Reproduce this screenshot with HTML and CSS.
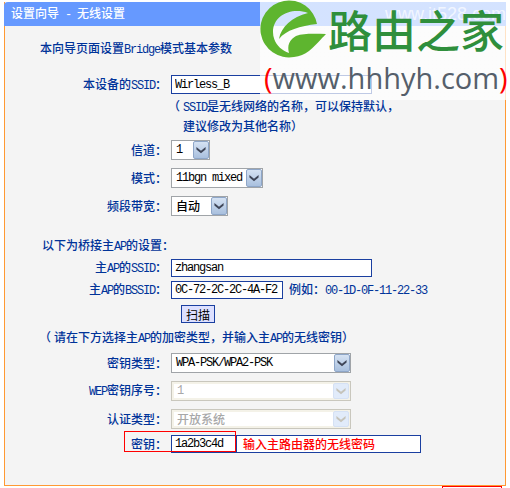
FILE: index.html
```html
<!DOCTYPE html>
<html lang="zh-CN">
<head>
    <meta charset="UTF-8">
    <title>设置向导 - 无线设置</title>
    <link rel="stylesheet" href="styles.css">
</head>
<body>
    <svg class="defs" width="0" height="0">
        <symbol id="chevron" viewBox="0 0 12 9">
            <path d="M0.5 1 L6 5.5 L11.5 1 L11.5 4 L6 8.5 L0.5 4 Z"/>
        </symbol>
    </svg>

    <div class="panel">
        <div class="panel-head">
            <span>设置向导<span class="en"> - </span>无线设置</span>
            <span class="site">www.it528.com</span>
        </div>

        <div class="intro">本向导页面设置<span class="en">Bridge</span>模式基本参数</div>

        <div class="row row-ssid">
            <label>本设备的<span class="en">SSID</span><span class="colon">：</span></label>
            <input class="field field-main" type="text" value="Wirless_B">
        </div>
        <div class="note">
            <div><span class="open">（</span><span class="en">SSID</span>是无线网络的名称，可以保持默认，</div>
            <div class="note-more">建议修改为其他名称）</div>
        </div>

        <div class="row row-channel">
            <label>信道<span class="colon">：</span></label>
            <div class="sel sel-channel"><span class="sel-text en">1</span><span class="sel-btn"><svg><use href="#chevron"/></svg></span></div>
        </div>
        <div class="row row-next">
            <label>模式<span class="colon">：</span></label>
            <div class="sel sel-mode"><span class="sel-text en">11bgn mixed</span><span class="sel-btn"><svg><use href="#chevron"/></svg></span></div>
        </div>
        <div class="row row-next">
            <label>频段带宽<span class="colon">：</span></label>
            <div class="sel sel-band"><span class="sel-text">自动</span><span class="sel-btn"><svg><use href="#chevron"/></svg></span></div>
        </div>

        <div class="subhead">以下为桥接主<span class="en">AP</span>的设置<span class="colon">：</span></div>

        <div class="row row-ap">
            <label>主<span class="en">AP</span>的<span class="en">SSID</span><span class="colon">：</span></label>
            <input class="field field-main" type="text" value="zhangsan">
        </div>
        <div class="row row-bssid">
            <label>主<span class="en">AP</span>的<span class="en">BSSID</span><span class="colon">：</span></label>
            <input class="field field-bssid" type="text" value="0C-72-2C-2C-4A-F2">
            <span class="example">例如<span class="colon">：</span><span class="en">00-1D-0F-11-22-33</span></span>
        </div>
        <button class="scan" type="button">扫描</button>

        <div class="subnote"><span class="open">（</span>请在下方选择主<span class="en">AP</span>的加密类型，并输入主<span class="en">AP</span>的无线密钥）</div>

        <div class="row row-enc">
            <label>密钥类型<span class="colon">：</span></label>
            <div class="sel sel-wide"><span class="sel-text en">WPA-PSK/WPA2-PSK</span><span class="sel-btn"><svg><use href="#chevron"/></svg></span></div>
        </div>
        <div class="row row-next">
            <label><span class="en">WEP</span>密钥序号<span class="colon">：</span></label>
            <div class="sel sel-wide sel-off"><span class="sel-text en">1</span><span class="sel-btn"><svg><use href="#chevron"/></svg></span></div>
        </div>
        <div class="row row-next">
            <label>认证类型<span class="colon">：</span></label>
            <div class="sel sel-wide sel-off"><span class="sel-text">开放系统</span><span class="sel-btn"><svg><use href="#chevron"/></svg></span></div>
        </div>
        <div class="row row-key">
            <label>密钥<span class="colon">：</span></label>
            <input class="field field-key" type="text" value="1a2b3c4d">
            <span class="key-hint">输入主路由器的无线密码</span>
            <span class="key-mark"></span>
        </div>
    </div>

    <div class="watermark">
        <svg class="logo" viewBox="0 0 70 60">
            <path fill-rule="evenodd" d="M59 24 A28.5 28.5 0 1 0 36 57 C50 56 58 44 68 34 Z M50 13 C34 7 15 15 15 32 C15 42 22 50 31 53 C29 46 31 40 38 36 C46 33 58 34 68 34 L59 24 C42 26 28 30 21 39 C23 27 34 17 50 13 Z"/>
        </svg>
        <div class="brand">路由之家</div>
        <div class="url"><span class="paren">(</span>www.hhhyh.com<span class="paren">)</span></div>
    </div>
    <div class="corner-box"></div>
</body>
</html>
```

FILE: styles.css
```css
html, body {
    margin: 0;
    padding: 0;
    height: 488px;
    overflow: hidden;
}
body {
    background: #fff;
    padding-top: 2px;
    box-sizing: border-box;
    font-family: "Noto Sans CJK SC", sans-serif;
    font-size: 12px;
    font-weight: 500;
    line-height: 16px;
    color: #003399;
    position: relative;
}
.defs {
    position: absolute;
}
.en {
    font-family: "Liberation Mono", monospace;
    letter-spacing: -1.2px;
}
.colon {
    font-family: "Noto Sans CJK TC", sans-serif;
}
.open {
    margin-left: -3px;
    margin-right: 3px;
}
.panel {
    width: 502px;
    height: 484px;
    margin-left: 4px;
    box-sizing: border-box;
    background: #f4f4f4;
    border-left: 1px solid #ff9933;
    border-right: 1px solid #ff9933;
    border-bottom: 1px solid #ff9933;
}
.panel-head {
    display: flex;
    justify-content: space-between;
    align-items: center;
    height: 24px;
    margin: 0 -1px;
    padding-left: 7px;
    background: #6699ff;
    color: #fff;
    border-radius: 4px 0 0 0;
    overflow: hidden;
}
.site {
    font-family: "Liberation Sans", sans-serif;
    font-size: 18px;
    font-weight: 400;
    color: rgba(255, 255, 255, 0.7);
    white-space: nowrap;
}
.intro {
    margin: 14px 0 0 35px;
    height: 16px;
}
.row {
    display: flex;
    align-items: center;
}
.row label {
    width: 162px;
    margin-right: 4px;
    text-align: right;
    flex: none;
}
.row-ssid { margin-top: 19px; height: 19px; }
.row-channel { margin-top: 5px; height: 20px; }
.row-next { margin-top: 8px; height: 20px; }
.row-ap { margin-top: 6px; height: 18px; }
.row-bssid { margin-top: 4px; height: 18px; }
.row-enc { margin-top: 8px; height: 20px; }
.row-key { margin-top: 6px; height: 18px; position: relative; }

.note {
    margin: 3px 0 0 166px;
    height: 38px;
    line-height: 18px;
}
.note-more {
    padding-left: 12px;
}
.subhead {
    margin: 21px 0 0 37px;
    height: 16px;
}
.subnote {
    margin: 6px 0 0 37px;
    height: 16px;
}

.field {
    box-sizing: border-box;
    height: 100%;
    margin: 0;
    padding: 0 0 0 3px;
    background: #fff;
    border: 1px solid #1a3fa0;
    border-radius: 0;
    outline: none;
    color: #000;
    font-family: "Liberation Mono", monospace;
    font-size: 12px;
    letter-spacing: -1.2px;
}
.field-main { width: 201px; }
.field-bssid { width: 112px; }
.field-key { width: 65px; border-right: none; }

.example {
    margin-left: 6px;
}
.scan {
    display: block;
    width: 34px;
    height: 18px;
    margin: 6px 0 0 176px;
    padding: 0;
    background: #dde0ff;
    border: 1px solid #1a3fa0;
    border-radius: 0;
    color: #000;
    font-family: inherit;
    font-size: 12px;
}

.sel {
    display: flex;
    align-items: center;
    justify-content: space-between;
    box-sizing: border-box;
    height: 20px;
    background: #fff;
    border: 1px solid #a0a4a8;
    color: #000;
}
.sel-text {
    padding-left: 4px;
    white-space: nowrap;
}
.sel-btn {
    display: flex;
    align-items: center;
    justify-content: center;
    width: 16px;
    height: 18px;
    background: linear-gradient(#d5e2f3, #a9c0de);
    border: 1px solid #8ea6c8;
    border-radius: 2px;
    box-sizing: border-box;
}
.sel-btn svg {
    width: 10px;
    height: 8px;
    fill: #3f4658;
}
.sel-channel { width: 39px; }
.sel-mode { width: 92px; }
.sel-band { width: 57px; }
.sel-wide { width: 180px; }
.sel-off {
    padding: 1px;
    background: #fff;
    border-color: #c9c7bd;
    box-shadow: inset 0 0 0 2px #f4f2e8;
    color: #a8a8a8;
}
.sel-off .sel-btn {
    height: 16px;
    background: #e1ebfa;
    border-color: #d5e1f4;
}
.sel-off .sel-btn svg {
    fill: #c5c3ba;
}

.key-hint {
    box-sizing: border-box;
    width: 185px;
    height: 100%;
    padding-left: 6px;
    background: #fff;
    border: 1px solid #1a3fa0;
    color: #f00;
}
.key-mark {
    position: absolute;
    left: 119px;
    top: -4px;
    width: 112px;
    height: 21px;
    box-sizing: border-box;
    border: 1px solid #f00;
}

.watermark {
    position: absolute;
    left: 260px;
    top: 0;
    width: 246px;
    height: 100px;
    background: linear-gradient(transparent 2px, rgba(255, 255, 255, 0.72) 2px);
}
.logo {
    position: absolute;
    left: -2px;
    top: 0;
    width: 70px;
    height: 60px;
    fill: #5eb52f;
}
.brand {
    position: absolute;
    left: 68px;
    top: 1px;
    font-size: 44px;
    line-height: 56px;
    font-weight: 500;
    color: #2f8f3c;
    white-space: nowrap;
}
.url {
    position: absolute;
    left: 4px;
    top: 59px;
    font-family: "Open Sans", sans-serif;
    font-size: 29px;
    font-weight: 400;
    line-height: 38px;
    color: #555f6b;
    white-space: nowrap;
}
.paren {
    color: #f00;
}
.corner-box {
    position: absolute;
    left: 442px;
    top: 486px;
    width: 60px;
    height: 10px;
    box-sizing: border-box;
    border: 1px solid #f00;
}
```
